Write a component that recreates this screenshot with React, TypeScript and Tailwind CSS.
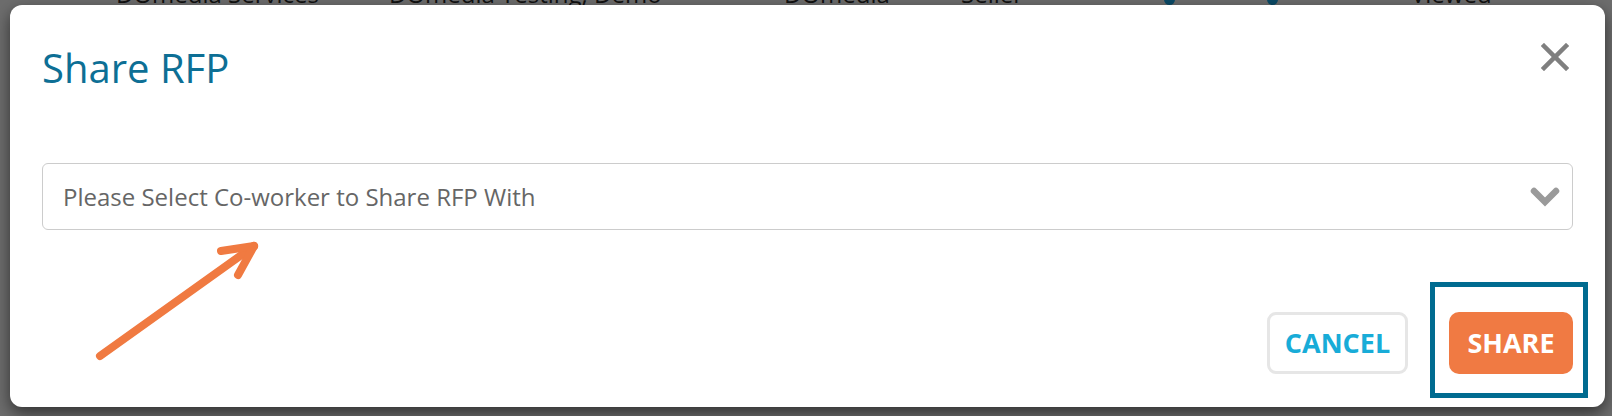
function BackdropRow() {
  // table row of the page behind the overlay, almost fully hidden above the fold
  const cells = [
    { text: "DOmedia Services", left: 116 },
    { text: "DOmedia Testing, Demo", left: 389 },
    { text: "DOmedia", left: 784 },
    { text: "Seller", left: 961 },
    { text: "Viewed", left: 1411 },
  ];
  return (
    <div className="absolute left-0 top-[-23px] h-[34px] w-full text-[24px] leading-[34px] text-[#111]">
      {cells.map((cell) => (
        <span key={cell.text} className="absolute" style={{ left: cell.left }}>
          {cell.text}
        </span>
      ))}
      <span className="absolute left-[1164px] top-[17px] h-[11px] w-[11px] rounded-full bg-[#0a4a66]" />
      <span className="absolute left-[1267px] top-[17px] h-[11px] w-[11px] rounded-full bg-[#0a4a66]" />
    </div>
  );
}

function PointerArrow() {
  return (
    <svg
      className="pointer-events-none absolute left-0 top-0"
      width="300"
      height="402"
      viewBox="0 0 300 402"
    >
      <g stroke="#f07a41" strokeWidth="8" strokeLinecap="round" strokeLinejoin="round" fill="none">
        <line x1="90" y1="351" x2="244" y2="241" />
        <line x1="244" y1="241" x2="211" y2="246" />
        <line x1="244" y1="241" x2="228" y2="270" />
      </g>
    </svg>
  );
}

export default function App() {
  return (
    <div className="relative h-[416px] w-[1612px] overflow-hidden bg-[#6d6d6d] font-['Open_Sans',sans-serif]">
      <BackdropRow />
      <div className="relative ml-[10px] mt-[5px] flex h-[402px] w-[1595px] flex-col rounded-[12px] bg-white px-8 shadow-[0_6px_16px_rgba(0,0,0,0.55)]">
        <div className="flex items-start justify-between pt-[41px]">
          <h2 className="text-[40px] leading-[44px] font-normal text-[#0d6f95]">Share RFP</h2>
          <button className="mr-[4px] mt-[-3px] flex h-[28px] w-[28px] items-center justify-center">
            <svg width="28" height="28" viewBox="0 0 28 28">
              <g stroke="#7f7f7f" strokeWidth="4.5" strokeLinecap="square">
                <line x1="3" y1="3" x2="25" y2="25" />
                <line x1="25" y1="3" x2="3" y2="25" />
              </g>
            </svg>
          </button>
        </div>

        <div className="mt-[73px] flex h-[67px] items-center justify-between rounded-[6px] border border-[#cccccc] pl-[20px] pr-[12px]">
          <span className="text-[24px] text-[#666666]">Please Select Co-worker to Share RFP With</span>
          <svg width="30" height="22" viewBox="0 0 30 22">
            <polyline
              points="4,5 15,16 26,5"
              fill="none"
              stroke="#9a9a9a"
              strokeWidth="6.5"
              strokeLinecap="round"
              strokeLinejoin="miter"
            />
          </svg>
        </div>

        <div className="mt-[82px] flex justify-end gap-[41px]">
          <button className="h-[62px] w-[141px] rounded-[9px] border-[3px] border-[#e6e6e6] bg-white text-[27px] font-bold text-[#18acd8]">
            CANCEL
          </button>
          <div className="relative">
            <button className="h-[62px] w-[124px] rounded-[10px] bg-[#f07a43] text-[27px] font-bold text-white">
              SHARE
            </button>
            <div className="pointer-events-none absolute left-[-19px] right-[-15px] top-[-30px] bottom-[-24px] border-[5px] border-[#006b90]" />
          </div>
        </div>

        <PointerArrow />
      </div>
    </div>
  );
}
